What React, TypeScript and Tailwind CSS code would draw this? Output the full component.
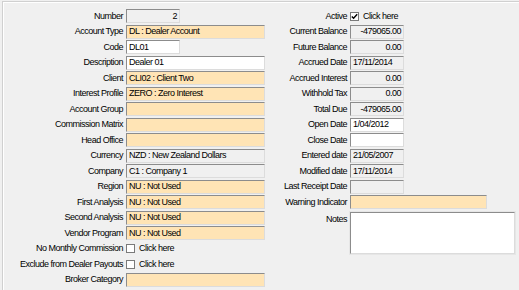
import React from 'react';

type Kind = 'gray' | 'yellow' | 'white';

type Row = {
  label: string;
  kind?: Kind;
  value?: string;
  width?: 'short' | 'long' | 'mid';
  align?: 'right';
  check?: boolean;
  checked?: boolean;
};

const leftRows: Row[] = [
  { label: 'Number', kind: 'gray', value: '2', width: 'short', align: 'right' },
  { label: 'Account Type', kind: 'yellow', value: 'DL : Dealer Account', width: 'long' },
  { label: 'Code', kind: 'white', value: 'DL01', width: 'short' },
  { label: 'Description', kind: 'white', value: 'Dealer 01', width: 'long' },
  { label: 'Client', kind: 'yellow', value: 'CLI02 : Client Two', width: 'long' },
  { label: 'Interest Profile', kind: 'yellow', value: 'ZERO : Zero Interest', width: 'long' },
  { label: 'Account Group', kind: 'yellow', value: '', width: 'long' },
  { label: 'Commission Matrix', kind: 'yellow', value: '', width: 'long' },
  { label: 'Head Office', kind: 'yellow', value: '', width: 'long' },
  { label: 'Currency', kind: 'gray', value: 'NZD : New Zealand Dollars', width: 'long' },
  { label: 'Company', kind: 'gray', value: 'C1 : Company 1', width: 'long' },
  { label: 'Region', kind: 'yellow', value: 'NU : Not Used', width: 'long' },
  { label: 'First Analysis', kind: 'yellow', value: 'NU : Not Used', width: 'long' },
  { label: 'Second Analysis', kind: 'yellow', value: 'NU : Not Used', width: 'long' },
  { label: 'Vendor Program', kind: 'yellow', value: 'NU : Not Used', width: 'long' },
  { label: 'No Monthly Commission', check: true },
  { label: 'Exclude from Dealer Payouts', check: true },
  { label: 'Broker Category', kind: 'yellow', value: '', width: 'long' },
];

const rightRows: Row[] = [
  { label: 'Active', check: true, checked: true },
  { label: 'Current Balance', kind: 'gray', value: '-479065.00', width: 'short', align: 'right' },
  { label: 'Future Balance', kind: 'gray', value: '0.00', width: 'short', align: 'right' },
  { label: 'Accrued Date', kind: 'gray', value: '17/11/2014', width: 'short' },
  { label: 'Accrued Interest', kind: 'gray', value: '0.00', width: 'short', align: 'right' },
  { label: 'Withhold Tax', kind: 'gray', value: '0.00', width: 'short', align: 'right' },
  { label: 'Total Due', kind: 'gray', value: '-479065.00', width: 'short', align: 'right' },
  { label: 'Open Date', kind: 'white', value: '1/04/2012', width: 'short' },
  { label: 'Close Date', kind: 'white', value: '', width: 'short' },
  { label: 'Entered date', kind: 'gray', value: '21/05/2007', width: 'short' },
  { label: 'Modified date', kind: 'gray', value: '17/11/2014', width: 'short' },
  { label: 'Last Receipt Date', kind: 'gray', value: '', width: 'short' },
  { label: 'Warning Indicator', kind: 'yellow', value: '', width: 'mid' },
];

const Field = ({ row }: { row: Row }) => {
  const bg =
    row.kind === 'yellow' ? 'bg-[#ffe4b5]' : row.kind === 'white' ? 'bg-white' : 'bg-[#f0f0f0]';
  const w = row.width === 'short' ? 'w-[54px]' : row.width === 'mid' ? 'w-[137px]' : 'w-[139px]';
  return (
    <div
      className={`${bg} ${w} h-[14px] shrink-0 border border-t-[#8c8c8c] border-l-[#8c8c8c] border-r-[#dcdcdc] border-b-[#dcdcdc] flex items-center px-[2px] leading-none ${
        row.align === 'right' ? 'justify-end' : ''
      }`}
    >
      {row.value}
    </div>
  );
};

const Check = ({ checked }: { checked?: boolean }) => (
  <div className="flex items-center">
    <div className="w-[9px] h-[9px] bg-white border border-[#7a7a7a] flex items-center justify-center">
      {checked && (
        <svg width="7" height="7" viewBox="0 0 7 7">
          <path d="M0.8 3.4 L2.6 5.3 L6.2 1.2" stroke="#000" strokeWidth="1.4" fill="none" />
        </svg>
      )}
    </div>
    <span className="ml-[4px]">Click here</span>
  </div>
);

const FormRow = ({ row, labelW }: { row: Row; labelW: string }) => (
  <div className="h-[15.53px] flex items-center">
    <div className={`${labelW} shrink-0 text-right pr-[3px] whitespace-nowrap`}>{row.label}</div>
    {row.check ? <Check checked={row.checked} /> : <Field row={row} />}
  </div>
);

export default function App() {
  return (
    <div
      className="w-[519px] h-[290px] bg-[#f0f0f0] overflow-hidden pt-[1px] pl-[2px] text-black text-[9px] tracking-[-0.5px]"
      style={{ fontFamily: '"Liberation Sans", Arial, sans-serif' }}
    >
      <div className="h-full border-t border-l border-[#d0d0d0]">
        <div className="h-full border-t border-l border-white pt-[5.5px] flex">
          <div className="w-[263px] shrink-0">
            {leftRows.map((r) => (
              <FormRow key={r.label} row={r} labelW="w-[122px]" />
            ))}
          </div>
          <div className="flex-1">
            {rightRows.map((r) => (
              <FormRow key={r.label} row={r} labelW="w-[83px]" />
            ))}
            <div className="flex mt-[1.5px]">
              <div className="w-[83px] shrink-0 text-right pr-[3px] pt-[1px]">Notes</div>
              <div className="w-[165px] h-[42px] bg-white border border-t-[#8c8c8c] border-l-[#8c8c8c] border-r-[#dcdcdc] border-b-[#dcdcdc] outline outline-1 outline-[#e6e6e6]" />
            </div>
          </div>
        </div>
      </div>
    </div>
  );
}
